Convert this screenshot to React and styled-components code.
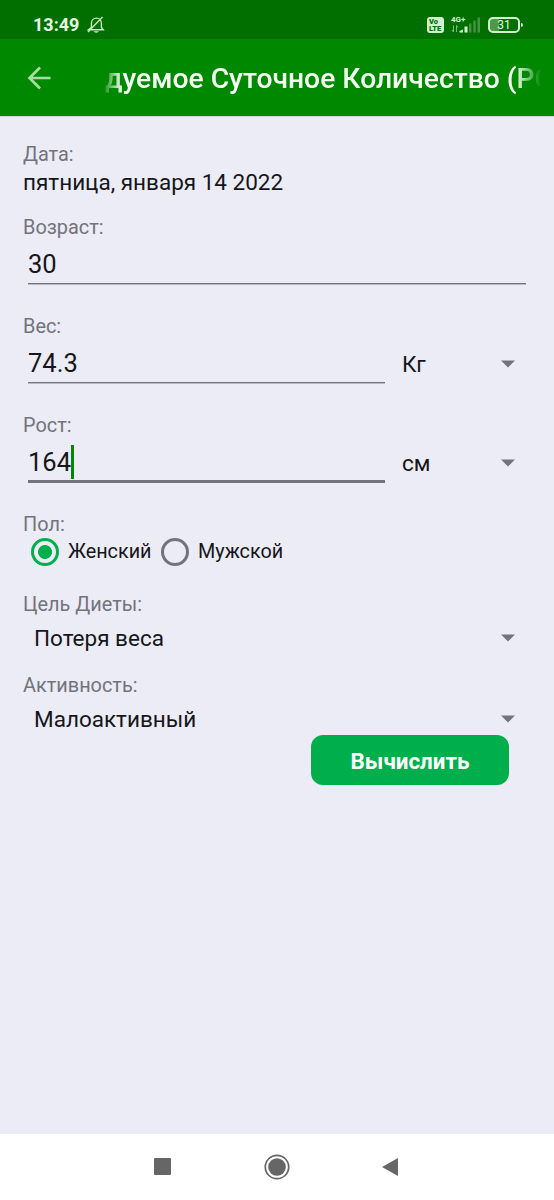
import React from "react";
import styled, { createGlobalStyle } from "styled-components";

const ink = "#16161a";
const muted = "#73737c";
const accent = "#00af4b";

const Global = createGlobalStyle`
  *, *::before, *::after { box-sizing: border-box; }
  body { margin: 0; background: #ebecf5; }
`;

const Screen = styled.div`
  width: 554px;
  height: 1200px;
  display: flex;
  flex-direction: column;
  overflow: hidden;
  background: #ebecf5;
  color: ${ink};
  font-family: Roboto, "Noto Sans", sans-serif;
`;

const StatusBar = styled.div`
  height: 39px;
  flex: none;
  display: flex;
  align-items: center;
  padding: 10px 30px 0 33px;
  background: #006f00;
  color: #e6f8e3;
`;

const Clock = styled.span`
  width: 54px;
  font-size: 18px;
  font-weight: 700;
  line-height: 22px;
  white-space: nowrap;
`;

const StatusIcons = styled.div`
  display: flex;
  align-items: center;
  margin-left: auto;
`;

const Volte = styled.div`
  width: 17px;
  height: 16px;
  border-radius: 3px;
  background: #d3f0ce;
  color: #006f00;
  font-size: 7.5px;
  font-weight: 900;
  line-height: 7px;
  padding: 1px 0 0 2px;
  margin-right: 7px;
`;

const Signal = styled.div`
  width: 30px;
  height: 19px;
  margin-right: 7px;
  color: #d3f0ce;
`;

const Battery = styled.div`
  position: relative;
  width: 32px;
  height: 16px;
  border: 2px solid #d3f0ce;
  border-radius: 5px;
  background: linear-gradient(90deg, #4c9a48 0 11px, transparent 11px);
  background-origin: border-box;
  font-size: 12px;
  line-height: 13px;
  text-align: center;
  margin-right: 4px;
  &::after {
    content: "";
    position: absolute;
    right: -5px;
    top: 4px;
    width: 2px;
    height: 4px;
    border-radius: 0 2px 2px 0;
    background: #d3f0ce;
  }
`;

const AppBar = styled.header`
  height: 77px;
  flex: none;
  display: flex;
  align-items: center;
  padding: 0 13px 0 27px;
  background: #008800;
  color: #f6fff4;
  box-shadow: 0 1px 0 #c9dccd;
`;

const Title = styled.h1`
  margin: 3px 0 0 51px;
  flex: 1;
  min-width: 0;
  padding-left: 3px;
  overflow: hidden;
  white-space: nowrap;
  font-size: 28.25px;
  font-weight: 500;
  line-height: 38px;
  mask-image: linear-gradient(90deg, transparent, #000 20px, #000 calc(100% - 26px), transparent);
`;

const Form = styled.main`
  flex: 1;
  display: flex;
  flex-direction: column;
  padding: 26px 23px 0;
`;

const Label = styled.div`
  height: 24px;
  margin-top: ${(p) => p.$gap || 0}px;
  font-size: 19.9px;
  line-height: 25px;
  color: ${muted};
`;

const DateText = styled.div`
  font-size: 22.5px;
  line-height: 33px;
`;

const Row = styled.div`
  display: flex;
`;

const Field = styled.div`
  display: flex;
  align-items: center;
  width: ${(p) => (p.$wide ? 498 : 357)}px;
  height: ${(p) => (p.$focused ? 46 : 45)}px;
  margin-left: 5px;
  padding-top: ${(p) => (p.$focused ? 7 : 6)}px;
  border-bottom: ${(p) => (p.$focused ? 3 : 1)}px solid ${muted};
  box-shadow: ${(p) => (p.$focused ? "none" : "0 1px 0 #b9bac3")};
  font-size: 25.5px;
  line-height: 37px;
`;

const Caret = styled.span`
  width: 3px;
  height: 34px;
  margin-top: -1px;
  background: #008800;
`;

const Select = styled.div`
  display: flex;
  align-items: center;
  justify-content: space-between;
  height: 38px;
  padding: 6px 16px 0 11px;
  font-size: 22.5px;
  line-height: 30px;
`;

const UnitSelect = styled(Select)`
  flex: 1;
  height: 46px;
  padding-left: 17px;
`;

const Radios = styled.div`
  display: flex;
  align-items: center;
  height: 31px;
  padding-left: 8px;
  font-size: 19.8px;
`;

const Radio = styled.label`
  display: flex;
  align-items: center;
  gap: 9px;
  width: 130px;
  line-height: 26px;
  white-space: nowrap;
`;

const RadioText = styled.span`
  padding-top: 1px;
`;

const RadioRing = styled.span`
  width: 28px;
  height: 28px;
  flex: none;
  border: 3px solid ${(p) => (p.$on ? accent : muted)};
  border-radius: 50%;
  background: ${(p) => (p.$on ? `radial-gradient(circle, ${accent} 6.6px, transparent 7.3px)` : "none")};
`;

const Button = styled.button`
  align-self: flex-end;
  width: 198px;
  height: 49.5px;
  margin-right: 22px;
  padding: 2px 0 0;
  border: 0;
  border-radius: 12px;
  background: ${accent};
  color: #fff;
  font: 700 22.4px Roboto, "Noto Sans", sans-serif;
`;

const NavBar = styled.nav`
  height: 66px;
  flex: none;
  display: flex;
  align-items: center;
  justify-content: center;
  gap: 88px;
  background: #fff;
`;

const Arrow = () => (
  <svg width="14" height="8" viewBox="0 0 14 8"><path d="M0 .5h14l-7 7z" fill={muted} /></svg>
);

export default function App() {
  return (
    <Screen>
      <Global />
      <StatusBar>
        <Clock>13:49</Clock>
        <svg width="18" height="18" viewBox="0 0 18 18" fill="none" stroke="#c4e8bf" strokeWidth="1.4">
          <path d="M1.5 13.8h14.8l-1.9-2.3V7.4c0-3-2-5.3-5-5.3s-5 2.3-5 5.3v4.1zM1 16L15.5 1" />
          <path d="M6.5 15.3h5.5c-.8 1.9-4.7 1.9-5.5 0z" fill="#c4e8bf" stroke="none" />
        </svg>
        <StatusIcons>
          <Volte>Vo<br />LTE</Volte>
          <Signal>
            <svg width="30" height="19" viewBox="0 0 30 19">
              <text x="0" y="7" fontSize="8" fontWeight="700" fill="currentColor">4G+</text>
              <path d="M2.5 10.5v6.5M1 15l1.5 2M5.5 17v-6.5M5.5 10.5l1.5 2" stroke="#7fbb7b" strokeWidth="1" fill="none" />
              <path d="M8.5 17.5v-1.500l3.500-1.500v3zM13.500 17.500v-6h3v6z" fill="currentColor" />
              <path d="M18 17.500v-9h2.400v9zM22.300 17.500v-12h2.400v12zM26.500 17.500V2.500h2.500v15z" fill="#439443" />
            </svg>
          </Signal>
          <Battery>31</Battery>
        </StatusIcons>
      </StatusBar>
      <AppBar>
        <svg width="24" height="24" viewBox="0 0 24 24" fill="none" stroke="#a5dea0" strokeWidth="2.7">
          <path d="M23.5 12H3M13 1.5L2.5 12 13 22.5" />
        </svg>
        <Title>дуемое Суточное Количество (РС</Title>
      </AppBar>
      <Form>
        <Label>Дата:</Label>
        <DateText>пятница, января 14 2022</DateText>
        <Label $gap={16}>Возраст:</Label>
        <Field $wide>30</Field>
        <Label $gap={30}>Вес:</Label>
        <Row>
          <Field>74.3</Field>
          <UnitSelect>Кг<Arrow /></UnitSelect>
        </Row>
        <Label $gap={29}>Рост:</Label>
        <Row>
          <Field $focused>164<Caret /></Field>
          <UnitSelect>см<Arrow /></UnitSelect>
        </Row>
        <Label $gap={29}>Пол:</Label>
        <Radios>
          <Radio><RadioRing $on /><RadioText>Женский</RadioText></Radio>
          <Radio><RadioRing /><RadioText>Мужской</RadioText></Radio>
        </Radios>
        <Label $gap={25}>Цель Диеты:</Label>
        <Select>Потеря веса<Arrow /></Select>
        <Label $gap={19}>Активность:</Label>
        <Select>Малоактивный<Arrow /></Select>
        <Button>Вычислить</Button>
      </Form>
      <NavBar>
        <svg width="26" height="26" viewBox="0 0 26 26"><rect x="4" y="4" width="17" height="17" rx="1" fill="#666" /></svg>
        <svg width="26" height="26" viewBox="0 0 26 26"><circle cx="13" cy="13" r="11.7" fill="none" stroke="#666" strokeWidth="1.7" /><circle cx="13" cy="13" r="8.8" fill="#666" /></svg>
        <svg width="26" height="26" viewBox="0 0 26 26"><path d="M4 13L20 4v18z" fill="#666" /></svg>
      </NavBar>
    </Screen>
  );
}
